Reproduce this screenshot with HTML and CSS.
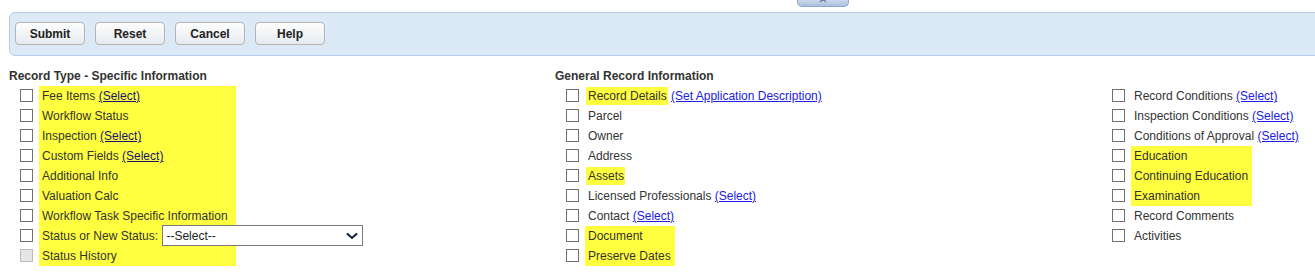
FILE: index.html
```html
<!DOCTYPE html>
<html lang="en">
<head>
    <meta charset="UTF-8">
    <title>Record Copy Options</title>
    <link rel="stylesheet" href="styles.css">
</head>
<body>

<div class="collapse-tab" title="Collapse">
    <svg width="8" height="5" viewBox="0 0 8 5"><polyline points="1,4 4,1 7,4" fill="none" stroke="#6d86a6" stroke-width="1.5"/></svg>
</div>

<div class="toolbar">
    <button class="btn">Submit</button>
    <button class="btn">Reset</button>
    <button class="btn">Cancel</button>
    <button class="btn">Help</button>
</div>

<div class="sections">
    <!-- Record type specific -->
    <div class="section">
        <h4>Record Type - Specific Information</h4>
        <div class="list">
            <div class="boxes">
                <input type="checkbox" class="chk">
                <input type="checkbox" class="chk">
                <input type="checkbox" class="chk">
                <input type="checkbox" class="chk">
                <input type="checkbox" class="chk">
                <input type="checkbox" class="chk">
                <input type="checkbox" class="chk">
                <input type="checkbox" class="chk">
                <input type="checkbox" class="chk" disabled>
            </div>
            <div class="labels">
                <div class="hl hl-wide">
                    <div class="row">Fee Items <a href="#" class="dark">(Select)</a></div>
                    <div class="row">Workflow Status</div>
                    <div class="row">Inspection <a href="#" class="dark">(Select)</a></div>
                    <div class="row">Custom Fields <a href="#" class="dark">(Select)</a></div>
                    <div class="row">Additional Info</div>
                    <div class="row">Valuation Calc</div>
                    <div class="row">Workflow Task Specific Information</div>
                    <div class="row">Status or New Status:
                        <span class="select-wrap">
                            <select class="status-select"><option>--Select--</option></select>
                            <svg class="chev" width="12" height="8" viewBox="0 0 12 8"><polyline points="1,1.5 6,6 11,1.5" fill="none" stroke="#0d1a3a" stroke-width="2"/></svg>
                        </span>
                    </div>
                    <div class="row">Status History</div>
                </div>
            </div>
        </div>
    </div>

    <!-- General record -->
    <div class="section">
        <h4>General Record Information</h4>
        <div class="list">
            <div class="boxes">
                <input type="checkbox" class="chk">
                <input type="checkbox" class="chk">
                <input type="checkbox" class="chk">
                <input type="checkbox" class="chk">
                <input type="checkbox" class="chk">
                <input type="checkbox" class="chk">
                <input type="checkbox" class="chk">
                <input type="checkbox" class="chk">
                <input type="checkbox" class="chk">
            </div>
            <div class="labels">
                <div class="row"><span class="hl-inline">Record Details</span> <a href="#">(Set Application Description)</a></div>
                <div class="row">Parcel</div>
                <div class="row">Owner</div>
                <div class="row">Address</div>
                <div class="row"><span class="hl-inline">Assets</span></div>
                <div class="row">Licensed Professionals <a href="#">(Select)</a></div>
                <div class="row">Contact <a href="#">(Select)</a></div>
                <div class="hl">
                    <div class="row">Document</div>
                    <div class="row">Preserve Dates</div>
                </div>
            </div>
        </div>
    </div>

    <!-- Conditions etc -->
    <div class="section">
        <h4>&nbsp;</h4>
        <div class="list">
            <div class="boxes">
                <input type="checkbox" class="chk">
                <input type="checkbox" class="chk">
                <input type="checkbox" class="chk">
                <input type="checkbox" class="chk">
                <input type="checkbox" class="chk">
                <input type="checkbox" class="chk">
                <input type="checkbox" class="chk">
                <input type="checkbox" class="chk">
            </div>
            <div class="labels">
                <div class="row">Record Conditions <a href="#">(Select)</a></div>
                <div class="row">Inspection Conditions <a href="#">(Select)</a></div>
                <div class="row">Conditions of Approval <a href="#">(Select)</a></div>
                <div class="hl hl-inset">
                    <div class="row">Education</div>
                    <div class="row">Continuing Education</div>
                    <div class="row">Examination</div>
                </div>
                <div class="row">Record Comments</div>
                <div class="row">Activities</div>
            </div>
        </div>
    </div>
</div>

</body>
</html>
```

FILE: styles.css
```css
body {
    font-family: "Liberation Sans", Arial, sans-serif;
    font-size: 12px;
    color: #333;
    background: #fff;
    margin: 0;
    padding: 12px 0 0 9px;
    position: relative;
    overflow: hidden;
}
.collapse-tab {
    position: absolute;
    top: 0;
    left: 797px;
    width: 50px;
    height: 6px;
    border: 1px solid #8eaacb;
    border-top: none;
    border-radius: 0 0 5px 5px;
    background: linear-gradient(#cad9eb, #a9c1dc);
    display: flex;
    justify-content: center;
    align-items: flex-start;
}
.collapse-tab svg {
    display: block;
    margin-top: -2px;
}
.toolbar {
    display: flex;
    gap: 10px;
    height: 23px;
    padding: 9px 6px 10px 5px;
    margin-right: -20px;
    background: #dce9f6;
    border: 1px solid #b3cce5;
    border-radius: 6px 0 0 6px;
}
.btn {
    width: 70px;
    height: 23px;
    padding: 0;
    font-family: inherit;
    font-size: 12px;
    font-weight: bold;
    color: #222;
    background: linear-gradient(#fdfdfd, #e6eaef);
    border: 1px solid #b4b4b4;
    border-radius: 4px;
}
.sections {
    display: grid;
    grid-template-columns: 546px 546px 1fr;
    margin-top: 10px;
}
.section h4 {
    margin: 0;
    font-size: 12px;
    line-height: 20px;
    font-weight: bold;
    color: #333;
}
.list {
    display: flex;
}
.boxes {
    display: flex;
    flex-direction: column;
    width: 30px;
}
.chk {
    appearance: none;
    -webkit-appearance: none;
    width: 13px;
    height: 13px;
    margin: 3px 0 4px 11px;
    border: 1px solid #707070;
    background: #fff;
    border-radius: 0;
}
.chk:disabled {
    border-color: #bcbcbc;
    background: #e6e6e6;
}
.labels {
    display: flex;
    flex-direction: column;
    align-items: flex-start;
}
.row {
    height: 20px;
    line-height: 20px;
    padding: 0 4px 0 3px;
    white-space: nowrap;
}
.hl {
    background: #ffff40;
}
.hl-wide {
    width: 197px;
}
.hl-inset {
    background-clip: content-box;
    padding: 2px 0;
    margin: -2px 0;
}
.hl-inline {
    display: inline-block;
    line-height: 18px;
    background: #ffff40;
    margin-left: -2px;
    padding: 0 1px 0 2px;
}
a {
    color: #2020e0;
    text-decoration: underline;
}
a.dark {
    color: #16166e;
}
.select-wrap {
    position: relative;
    display: inline-block;
    vertical-align: top;
    margin-top: -1px;
    margin-left: 1px;
    height: 21px;
}
.status-select {
    appearance: none;
    -webkit-appearance: none;
    width: 201px;
    height: 21px;
    margin: 0;
    padding: 0 0 0 3px;
    font-family: inherit;
    font-size: 12px;
    color: #222;
    background: #fff;
    border: 1px solid #7a7a7a;
    border-radius: 0;
}
.chev {
    position: absolute;
    right: 5px;
    top: 7px;
}
```
